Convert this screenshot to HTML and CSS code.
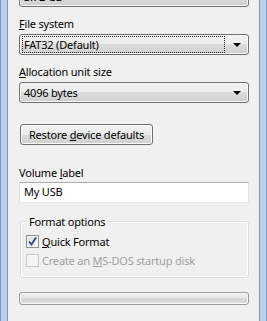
FILE: index.html
```html
<!DOCTYPE html>
<html lang="en">
<head>
  <meta charset="UTF-8">
  <title>Format USB</title>
  <link rel="stylesheet" href="styles.css">
</head>
<body>
  <div class="window">
    <div class="dialog">

      <!-- capacity (scrolled off the top) -->
      <div class="combo combo-top">
        <span class="combo-text">3.72 GB</span>
        <span class="arrow"></span>
      </div>

      <div class="label label-fs"><u>F</u>ile system</div>
      <div class="combo">
        <span class="combo-text focus">FAT32 (Default)</span>
        <span class="arrow"></span>
      </div>

      <div class="label label-alloc"><u>A</u>llocation unit size</div>
      <div class="combo">
        <span class="combo-text">4096 bytes</span>
        <span class="arrow"></span>
      </div>

      <button class="btn">Restore <u>d</u>evice defaults</button>

      <div class="label label-vol">Volume <u>l</u>abel</div>
      <div class="textbox">My USB</div>

      <fieldset class="group">
        <legend>Format options</legend>
        <div class="check-row">
          <span class="checkbox checked">
            <svg width="9" height="9" viewBox="0 0 9 9"><path d="M1 4.5 L3.5 7.5 L8 0.5" fill="none" stroke="#34488a" stroke-width="1.9"/></svg>
          </span>
          <span><u>Q</u>uick Format</span>
        </div>
        <div class="check-row disabled">
          <span class="checkbox"></span>
          <span>Create an <u>M</u>S-DOS startup disk</span>
        </div>
      </fieldset>

      <div class="progress"></div>

    </div>
  </div>
</body>
</html>
```

FILE: styles.css
```css
body {
  margin: 0;
  font-family: "Noto Sans", "DejaVu Sans", sans-serif;
  font-size: 11px;
  letter-spacing: -0.2px;
  color: #000;
}
u {
  text-decoration: underline;
  text-underline-offset: 1px;
}
.window {
  height: 321px;
  box-sizing: border-box;
  padding: 0 6px;
  background: #b9d1ee;
  border-left: 1px solid #7b96bd;
  border-right: 1px solid #7b96bd;
  overflow: hidden;
}
.dialog {
  height: 321px;
  box-sizing: border-box;
  background: #f0f0f0;
  border-left: 1px solid #8496ad;
  border-right: 1px solid #8496ad;
  padding-left: 11px;
  display: flex;
  flex-direction: column;
  align-items: flex-start;
}
.label {
  line-height: 15px;
  height: 15px;
}
.label-fs { margin-top: 9px; margin-bottom: 3px; }
.label-alloc { margin-top: 9px; margin-bottom: 3px; }
.label-vol { margin-top: 20px; margin-bottom: 2px; }

.combo {
  width: 230px;
  height: 21px;
  box-sizing: border-box;
  border: 1px solid #707070;
  border-radius: 3px;
  background: linear-gradient(#f2f2f2 0%, #ebebeb 50%, #dddddd 50%, #cfcfcf 100%);
  box-shadow: inset 0 0 0 1px #f8f8f8;
  display: flex;
  align-items: center;
  padding: 0 2px 0 2px;
}
.combo-top {
  margin-top: -14px;
}
.combo-text {
  flex: 1;
  height: 15px;
  line-height: 15px;
  padding-left: 1px;
  border: 1px dotted transparent;
}
.combo-text.focus {
  border-color: #222;
}
.arrow {
  width: 0;
  height: 0;
  margin: 0 5px 0 8px;
  border-left: 4px solid transparent;
  border-right: 4px solid transparent;
  border-top: 4px solid #000;
}

.btn {
  margin-top: 21px;
  margin-left: 1px;
  width: 133px;
  height: 21px;
  box-sizing: border-box;
  border: 1px solid #707070;
  border-radius: 3px;
  background: linear-gradient(#f2f2f2 0%, #ebebeb 50%, #dddddd 50%, #cfcfcf 100%);
  box-shadow: inset 0 0 0 1px #fbfbfb;
  font: inherit;
  letter-spacing: inherit;
  color: #000;
  padding: 0;
  line-height: 17px;
}

.textbox {
  width: 230px;
  height: 21px;
  box-sizing: border-box;
  background: #fff;
  border: 1px solid #e2e3ea;
  border-top-color: #abadb3;
  border-bottom-color: #e3e9ef;
  padding-left: 4px;
  line-height: 18px;
}

.group {
  margin: 11px 0 0 1px;
  width: 229px;
  height: 64px;
  box-sizing: border-box;
  border: 1px solid #d5dfe5;
  border-radius: 3px;
  box-shadow: inset 0 0 0 1px #fff;
  padding: 3px 0 0 5px;
  position: relative;
}
.group legend {
  padding: 0 2px;
  margin-left: 1px;
  line-height: 15px;
}
.check-row {
  display: flex;
  align-items: center;
  height: 19px;
}
.checkbox {
  width: 13px;
  height: 13px;
  box-sizing: border-box;
  border: 1px solid #8e8f8f;
  background: linear-gradient(135deg, #dcdcdc, #fafafa);
  box-shadow: inset 0 0 0 1px #f4f4f4;
  margin-right: 3px;
  display: flex;
  align-items: center;
  justify-content: center;
}
.disabled {
  color: #a0a0a0;
}
.disabled .checkbox {
  border-color: #c8c8c8;
  background: #f4f4f4;
  box-shadow: none;
}

.progress {
  margin-top: 14px;
  width: 230px;
  height: 13px;
  box-sizing: border-box;
  border: 1px solid #9a9a9a;
  border-radius: 3px;
  background: linear-gradient(#f3f3f3 0%, #e6e6e6 40%, #d2d2d2 60%, #e2e2e2 100%);
  box-shadow: inset 0 0 0 1px #f8f8f8;
}
```
